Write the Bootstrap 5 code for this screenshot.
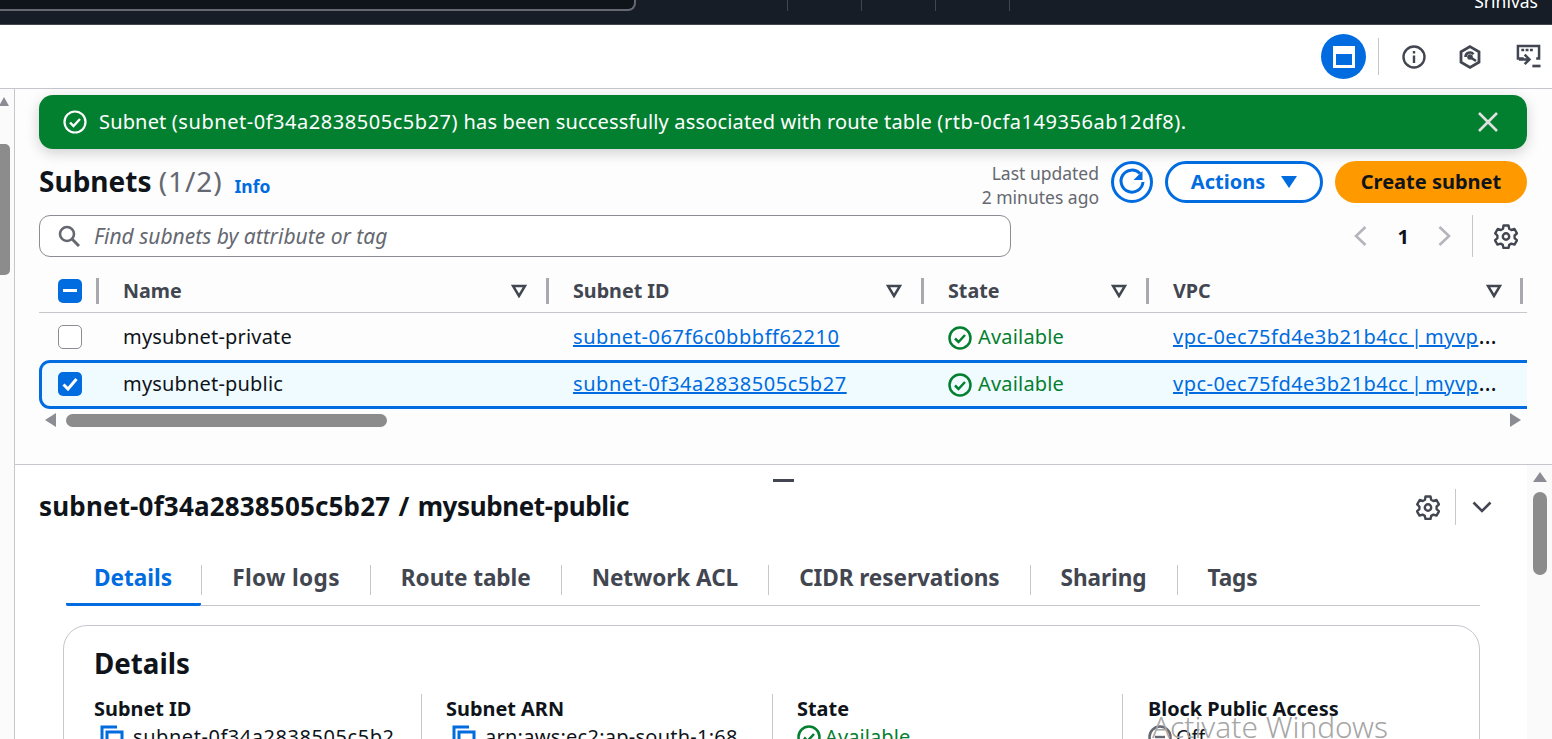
<!DOCTYPE html>
<html lang="en"><head><meta charset="utf-8"><title>Subnets</title>
<link href="https://cdn.jsdelivr.net/npm/bootstrap@5.3.0/dist/css/bootstrap.min.css" rel="stylesheet">
<style>
html,body{height:739px;overflow:hidden;background:#fff}
body{font-family:"Noto Sans",sans-serif;font-size:20px;color:#0f141a;line-height:1.3}
a{color:#006ce0}
.topbar{height:25px;background:#161d26;border-bottom:1px solid #424650;overflow:hidden}
.searchstub{width:636px;height:11px;background:#0f141a;border:2px solid #656871;border-top:0;border-left:0;border-radius:0 0 8px 0}
.topsep{width:1px;height:11px;background:#424650;margin-right:73px}
.uname{color:#fff;font-size:17.5px;margin-top:-9px;margin-left:auto;margin-right:14px;line-height:20px}
.toolbar{height:64px;border-bottom:1px solid #c6c6cd;padding-right:11px}
.roundbtn{width:45px;height:45px;border-radius:50%;background:#006ce0}
.vsep{width:1px;height:37px;background:#c6c6cd;margin:0 23px 0 12px}
.workarea{height:650px}
.siderail{width:15px;flex:none;border-right:1px solid #c6c6cd;background:#fbfbfb;padding-top:8px}
.railup{width:0;height:0;border:5px solid transparent;border-top:0;border-bottom:9px solid #8c8c94;margin-left:-1px}
.railthumb{width:10px;height:131px;background:#8c8c8c;border-radius:0 5px 5px 0;margin-top:38px}
.toppanel{height:376px;padding:6px 25px 0 24px;background:#fdfdfd;border-bottom:1px solid #c6c6cd}
.flashbar{height:54px;background:#037f30;color:#fff;border-radius:14px;box-shadow:0 4px 14px rgba(0,0,0,.18);padding:0 28px 0 24px;font-size:20px}
.flashtext{margin-left:12px;white-space:nowrap;letter-spacing:.16px}
.idrun{letter-spacing:.54px}
.headrow{height:66px}
.pagetitle{font-size:28px;font-weight:700;margin:0}
.titlecount{font-weight:400;color:#656871;letter-spacing:.9px}
.infolink{font-size:17.5px;font-weight:700;text-decoration:none;margin:8px 0 0 12px}
.updated{font-size:17.5px;line-height:24px;color:#656871;text-align:right;margin-right:12px;margin-top:5px}
.outbtn{height:42px;border:3px solid #006ce0;border-radius:21px;color:#006ce0;font-weight:700;background:#fff}
.circlebtn{width:42px;padding:0;margin-right:12px}
.actionsbtn{width:158px;margin-right:12px;gap:16px}
.createbtn{width:192px;height:42px;border-radius:21px;background:#ff9900;border:0;color:#0f141a;font-weight:700}
.filterbox{width:972px;height:42px;border:1px solid #8c8c94;border-radius:11px;background:#fff;padding-left:18px;color:#656871;font-style:italic;font-size:21px}
.filterbox span{margin:2px 0 0 14px}
.pager{height:42px;margin-right:9px}
.pagenum{font-weight:700;margin:1px 29px 0 31px}
.pagersep{width:1px;height:42px;background:#c6c6cd;margin:0 21px 0 21px}
.subnet-grid{table-layout:fixed;width:1488px;border-collapse:separate;border-spacing:0;margin-top:6px}
.subnet-grid th,.subnet-grid td{padding:0;white-space:nowrap;vertical-align:middle}
.subnet-grid td{overflow:hidden}
.subnet-grid th{height:50px;padding-top:7px;border-bottom:1px solid #c6c6cd;font-weight:700;color:#424650;font-size:19.7px}
.subnet-grid td{height:47px;letter-spacing:.18px}
.colcell{height:26px;margin-left:-2px;padding:0 21px 0 24px;border-left:3px solid #a8a8ae}
.colcell.first{margin-left:0;border-left:0;padding:0 0 0 19px;width:59px}
.colend{border-right:3px solid #a8a8ae;margin-right:4px;padding-right:18px}
.boxmark{width:24px;height:24px;border-radius:5px;background:#006ce0}
.boxempty{background:#fff;border:1.5px solid #8c8c94}
.first-td{padding-left:19px!important}
.name-td{padding-left:25px!important}
.id-td,.st-td,.vpc-td{padding-left:25px!important}
.id-td a{letter-spacing:.56px}
.vpc-td a{letter-spacing:.48px;word-spacing:-3px}
.ellips{font-size:23px;line-height:1}
.statusok{color:#037f30;letter-spacing:.1px}
.statusok svg{margin-right:6px}
.sel td{background:#f0fbff;border-top:3px solid #006ce0;border-bottom:3px solid #006ce0;height:49px;padding-bottom:2px!important}
.sel td:first-child{border-left:3px solid #006ce0;border-radius:11px 0 0 11px;padding-left:16px!important}
.hscroll{height:14px;margin-top:4px;padding-left:6px;width:1488px}
.hleft{border:7px solid transparent;border-left:0;border-right:11px solid #8c8c94;width:0;height:0}
.hright{border:7px solid transparent;border-right:0;border-left:11px solid #8c8c94;width:0;height:0;margin-left:auto;margin-right:6px}
.hthumb{width:321px;height:13px;border-radius:7px;background:#8c8c8c;margin-left:10px}
.bottompanel{height:274px;overflow:hidden;background:#fff}
.bottommain{width:1512px;overflow:hidden}
.dragdash{width:21px;height:3px;background:#424650;margin:14px auto 0;position:relative;left:12px}
.paneltitle{padding:0 24px;margin-top:3px;height:44px}
.paneltitle h2{font-size:26px;font-weight:700;margin:0;word-spacing:1.5px}
.idpart{letter-spacing:.17px}
.namepart{letter-spacing:-.4px}
.psep{width:1px;height:36px;background:#c6c6cd;margin:0 16px 0 15px}
.tabrow{margin:26px 47px 0 51px;height:51px;border-bottom:1px solid #c6c6cd}
.tabitem{height:51px;font-weight:700;font-size:22.6px;color:#424650;padding:0 30px 6px 31px;position:relative;white-space:nowrap;letter-spacing:-.08px}
.tabitem+.tabitem::before{content:"";position:absolute;left:0;top:10px;height:30px;width:1px;background:#c6c6cd}
.tabitem.on{color:#006ce0;border-bottom:3px solid #006ce0;margin-bottom:-1px;padding:0 29px 3px 28px;border-radius:2px;letter-spacing:0}
.tabitem.tabwide{letter-spacing:.35px}
.detailcard{margin:19px 47px 0 48px;border:1px solid #c6c6cd;border-radius:24px;height:140px;padding:21px 30px;background:#fff}
.detailcard h3{font-size:27.7px;font-weight:700;margin:0 0 14px}
.kvrow{overflow:hidden;height:60px}
.kv{padding-left:24px;border-left:1px solid #c6c6cd;height:70px;padding-top:2px;white-space:nowrap;overflow:hidden}
.kv:first-child{padding-left:0;border-left:0}
.kvlabel{font-weight:700;font-size:19.9px}
.kvval{margin-top:2px;display:flex;align-items:center}
.kv1{width:327px}.kv2{width:351px}.kv3{width:350px}.kv4{flex:1;padding-left:25px}
.copyicon{margin:0 9px 0 6px}
.kv1 .kvval{letter-spacing:.55px}
.kv2 .kvval{letter-spacing:.25px}
.sidebar-scroll{flex:none;width:25px;background:#fafafa;padding:7px 0 0 6px}
.railup2{width:0;height:0;border:7px solid transparent;border-top:0;border-bottom:10px solid #8c8c94;margin-bottom:10px}
.railthumb2{width:14px;height:83px;background:#8c8c8c;border-radius:7px}
.activate{position:absolute;left:1152px;top:709px;color:#a6a6a6;font-size:29.8px;line-height:36px;white-space:nowrap;font-weight:300}
</style></head>
<body>
<header class="topbar d-flex">
  <div class="searchstub me-auto flex-none"></div>
  <div class="d-flex position-absolute" style="left:787px"><div class="topsep"></div><div class="topsep"></div><div class="topsep"></div><div class="topsep"></div></div>
  <div class="uname">Srinivas</div>
</header>
<div class="toolbar d-flex align-items-center justify-content-end">
  <div class="roundbtn d-flex align-items-center justify-content-center">
    <svg width="22" height="22" viewBox="0 0 22 22"><path fill="none" stroke="#fff" stroke-width="3" d="M1.500 1.500h19v19h-19z"/><path fill="#fff" d="M3 3h16v5H3z"/></svg>
  </div>
  <div class="vsep"></div>
  <svg width="24" height="24" viewBox="0 0 24 24" style="margin-right:33px"><circle cx="12" cy="12" r="10.500" fill="none" stroke="#424650" stroke-width="2.400"/><path fill="#424650" d="M10.800 10.500h2.400V18h-2.400zM10.800 6h2.400v2.600h-2.400z"/></svg>
  <svg width="22" height="24" viewBox="0 0 22 24" style="margin-right:35px"><path fill="none" stroke="#424650" stroke-width="2.800" d="M11 1.600l9 5.200v10.400l-9 5.200-9-5.200V6.800z"/><circle cx="11" cy="12" r="2.800" fill="#424650"/><path fill="none" stroke="#424650" stroke-width="2.600" d="M11 12l6 4M6.500 12a4.500 4.500 0 0 1 8-2.800"/></svg>
  <svg width="25" height="25" viewBox="0 0 26 26"><path fill="none" stroke="#424650" stroke-width="2.600" d="M8 15H2V2h22v13h-3"/><path fill="#424650" d="M5.500 5h3v2.500h-3zM10 5h3v2.500h-3zM14.500 5h3v2.500h-3z"/><path fill="none" stroke="#424650" stroke-width="2.600" d="M9 11l5 5-5 5M3 16h10"/><path fill="#424650" d="M17 21.500h8.500v2.800H17z"/></svg>
</div>
<div class="workarea d-flex">
  <div class="siderail"><div class="railup"></div><div class="railthumb"></div></div>
  <div class="flex-grow-1" style="min-width:0">
    <section class="toppanel">
      <div class="flashbar d-flex align-items-center">
        <svg width="24" height="24" viewBox="0 0 24 24"><circle cx="12" cy="12" r="10.500" fill="none" stroke="#fff" stroke-width="2.200"/><path fill="none" stroke="#fff" stroke-width="2.400" d="M7 12.500l3.500 3.500L17 9"/></svg>
        <span class="flashtext">Subnet <span class="idrun">(subnet-0f34a2838505c5b27)</span> has been successfully associated with route table <span class="idrun">(rtb-0cfa149356ab12df8).</span></span>
        <svg class="ms-auto" width="22" height="22" viewBox="0 0 22 22"><path fill="none" stroke="#e0e0e0" stroke-width="2.600" d="M2 2l18 18M20 2L2 20"/></svg>
      </div>
      <div class="headrow d-flex align-items-center">
        <h1 class="pagetitle">Subnets <span class="titlecount">(1/2)</span></h1>
        <a href="#" class="infolink">Info</a>
        <div class="updated ms-auto">Last updated<br>2 minutes ago</div>
        <button class="outbtn circlebtn d-flex align-items-center justify-content-center">
          <svg width="28" height="28" viewBox="0 0 28 28"><path fill="none" stroke="#006ce0" stroke-width="3" d="M22 5.500A11 11 0 1 0 25 14"/><path fill="#006ce0" d="M24.500 3v9h-9z"/></svg>
        </button>
        <button class="outbtn actionsbtn d-flex align-items-center justify-content-center">Actions
          <svg width="16" height="12" viewBox="0 0 16 12"><path fill="#006ce0" d="M0 0h16L8 12z"/></svg>
        </button>
        <button class="createbtn">Create subnet</button>
      </div>
      <div class="d-flex">
        <div class="filterbox d-flex align-items-center">
          <svg width="22" height="22" viewBox="0 0 22 22"><circle cx="9" cy="9" r="7" fill="none" stroke="#656871" stroke-width="2.600"/><path stroke="#656871" stroke-width="3" d="M14 14l7 7"/></svg>
          <span>Find subnets by attribute or tag</span>
        </div>
        <div class="pager d-flex align-items-center ms-auto">
          <svg width="13" height="22" viewBox="0 0 13 22"><path fill="none" stroke="#b4b4bb" stroke-width="2.600" d="M11.500 2L2 11l9.500 9"/></svg>
          <span class="pagenum">1</span>
          <svg width="13" height="22" viewBox="0 0 13 22"><path fill="none" stroke="#b4b4bb" stroke-width="2.600" d="M1.500 2L11 11l-9.500 9"/></svg>
          <div class="pagersep"></div>
          <svg width="24" height="25" viewBox="0 0 24 25"><path fill="none" stroke="#424650" stroke-width="2.400" stroke-linejoin="round" d="M9.500 1.500h5l.7 3.200 2.200 1.300 3.100-1 2.500 4.300-2.400 2.200v2.600l2.400 2.200-2.500 4.300-3.100-1-2.200 1.300-.7 3.100h-5l-.7-3.100-2.200-1.300-3.100 1-2.500-4.300 2.400-2.200v-2.600L1.200 9.300l2.500-4.300 3.100 1L9 4.700z"/><circle cx="12" cy="12.500" r="3.200" fill="none" stroke="#424650" stroke-width="2.400"/></svg>
        </div>
      </div>
      <table class="subnet-grid">
        <colgroup><col style="width:59px"><col style="width:450px"><col style="width:375px"><col style="width:225px"><col style="width:379px"></colgroup>
        <thead><tr>
          <th><div class="colcell first d-flex align-items-center"><span class="boxmark d-flex align-items-center justify-content-center"><svg width="14" height="4"><path fill="#fff" d="M0 0h14v3H0z"/></svg></span></div></th>
          <th><div class="colcell d-flex align-items-center justify-content-between">Name <svg width="16" height="14" viewBox="0 0 16 14"><path fill="none" stroke="#424650" stroke-width="2.500" d="M2 2h12L8 12z"/></svg></div></th>
          <th><div class="colcell d-flex align-items-center justify-content-between">Subnet ID <svg width="16" height="14" viewBox="0 0 16 14"><path fill="none" stroke="#424650" stroke-width="2.500" d="M2 2h12L8 12z"/></svg></div></th>
          <th><div class="colcell d-flex align-items-center justify-content-between">State <svg width="16" height="14" viewBox="0 0 16 14"><path fill="none" stroke="#424650" stroke-width="2.500" d="M2 2h12L8 12z"/></svg></div></th>
          <th><div class="colcell colend d-flex align-items-center justify-content-between">VPC <svg width="16" height="14" viewBox="0 0 16 14"><path fill="none" stroke="#424650" stroke-width="2.500" d="M2 2h12L8 12z"/></svg></div></th>
        </tr></thead>
        <tbody>
          <tr>
            <td class="first-td"><span class="boxmark boxempty d-block"></span></td>
            <td class="name-td">mysubnet-private</td>
            <td class="id-td"><a href="#">subnet-067f6c0bbbff62210</a></td>
            <td class="st-td statusok"><svg width="24" height="24" viewBox="0 0 24 24" class="align-text-bottom"><circle cx="12" cy="12" r="10.500" fill="none" stroke="#037f30" stroke-width="2.500"/><path fill="none" stroke="#037f30" stroke-width="2.500" d="M7 12.500l3.500 3.500L17 9"/></svg>Available</td>
            <td class="vpc-td"><a href="#">vpc-0ec75fd4e3b21b4cc | myvp</a><span class="ellips">…</span></td>
          </tr>
          <tr class="sel">
            <td class="first-td"><span class="boxmark d-flex align-items-center justify-content-center"><svg width="16" height="14" viewBox="0 0 16 14"><path fill="none" stroke="#fff" stroke-width="3" d="M1.500 7.500L6 12l8.500-10"/></svg></span></td>
            <td class="name-td">mysubnet-public</td>
            <td class="id-td"><a href="#">subnet-0f34a2838505c5b27</a></td>
            <td class="st-td statusok"><svg width="24" height="24" viewBox="0 0 24 24" class="align-text-bottom"><circle cx="12" cy="12" r="10.500" fill="none" stroke="#037f30" stroke-width="2.500"/><path fill="none" stroke="#037f30" stroke-width="2.500" d="M7 12.500l3.500 3.500L17 9"/></svg>Available</td>
            <td class="vpc-td"><a href="#">vpc-0ec75fd4e3b21b4cc | myvp</a><span class="ellips">…</span></td>
          </tr>
        </tbody>
      </table>
      <div class="hscroll d-flex align-items-center"><div class="hleft"></div><div class="hthumb"></div><div class="hright"></div></div>
    </section>
    <div class="d-flex bottompanel">
      <div class="bottommain flex-grow-1">
        <div class="dragdash"></div>
        <div class="paneltitle d-flex align-items-center">
          <h2 class="me-auto"><span class="idpart">subnet-0f34a2838505c5b27</span> / <span class="namepart">mysubnet-public</span></h2>
          <svg width="24" height="25" viewBox="0 0 24 25"><path fill="none" stroke="#424650" stroke-width="2.400" stroke-linejoin="round" d="M9.500 1.500h5l.7 3.200 2.200 1.300 3.100-1 2.500 4.300-2.400 2.200v2.600l2.400 2.200-2.500 4.300-3.100-1-2.200 1.300-.7 3.100h-5l-.7-3.100-2.200-1.300-3.100 1-2.500-4.300 2.400-2.200v-2.600L1.200 9.300l2.500-4.300 3.100 1L9 4.700z"/><circle cx="12" cy="12.500" r="3.200" fill="none" stroke="#424650" stroke-width="2.400"/></svg>
          <div class="psep"></div>
          <svg width="20" height="12" viewBox="0 0 20 12" style="margin-right:11px"><path fill="none" stroke="#424650" stroke-width="2.600" d="M1.500 1.500L10 10l8.500-8.500"/></svg>
        </div>
        <div class="tabrow d-flex">
          <div class="tabitem on d-flex align-items-center">Details</div>
          <div class="tabitem tabwide d-flex align-items-center">Flow logs</div>
          <div class="tabitem d-flex align-items-center">Route table</div>
          <div class="tabitem d-flex align-items-center">Network ACL</div>
          <div class="tabitem d-flex align-items-center">CIDR reservations</div>
          <div class="tabitem d-flex align-items-center">Sharing</div>
          <div class="tabitem d-flex align-items-center">Tags</div>
        </div>
        <div class="detailcard">
          <h3>Details</h3>
          <div class="d-flex kvrow">
            <div class="kv kv1"><div class="kvlabel">Subnet ID</div><div class="kvval"><svg class="copyicon" width="24" height="24" viewBox="0 0 24 24"><path fill="none" stroke="#006ce0" stroke-width="3" d="M2 17V2h15M7 7h15v15H7z"/></svg>subnet-0f34a2838505c5b2</div></div>
            <div class="kv kv2"><div class="kvlabel">Subnet ARN</div><div class="kvval"><svg class="copyicon" width="24" height="24" viewBox="0 0 24 24"><path fill="none" stroke="#006ce0" stroke-width="3" d="M2 17V2h15M7 7h15v15H7z"/></svg>arn:aws:ec2:ap-south-1:68</div></div>
            <div class="kv kv3"><div class="kvlabel">State</div><div class="kvval statusok"><svg class="me-1" width="24" height="24" viewBox="0 0 24 24"><circle cx="12" cy="12" r="10.500" fill="none" stroke="#037f30" stroke-width="2.500"/><path fill="none" stroke="#037f30" stroke-width="2.500" d="M7 12.500l3.500 3.500L17 9"/></svg>Available</div></div>
            <div class="kv kv4"><div class="kvlabel">Block Public Access</div><div class="kvval"><svg class="me-1" width="24" height="24" viewBox="0 0 24 24"><circle cx="12" cy="12" r="10.500" fill="none" stroke="#656871" stroke-width="2.500"/><path stroke="#656871" stroke-width="2.400" d="M7 12h10"/></svg>Off</div></div>
          </div>
        </div>
      </div>
      <div class="sidebar-scroll"><div class="railup2"></div><div class="railthumb2"></div></div>
    </div>
  </div>
</div>
<div class="activate">Activate Windows</div>
<script src="https://cdn.jsdelivr.net/npm/bootstrap@5.3.0/dist/js/bootstrap.bundle.min.js"></script>
</body></html>
